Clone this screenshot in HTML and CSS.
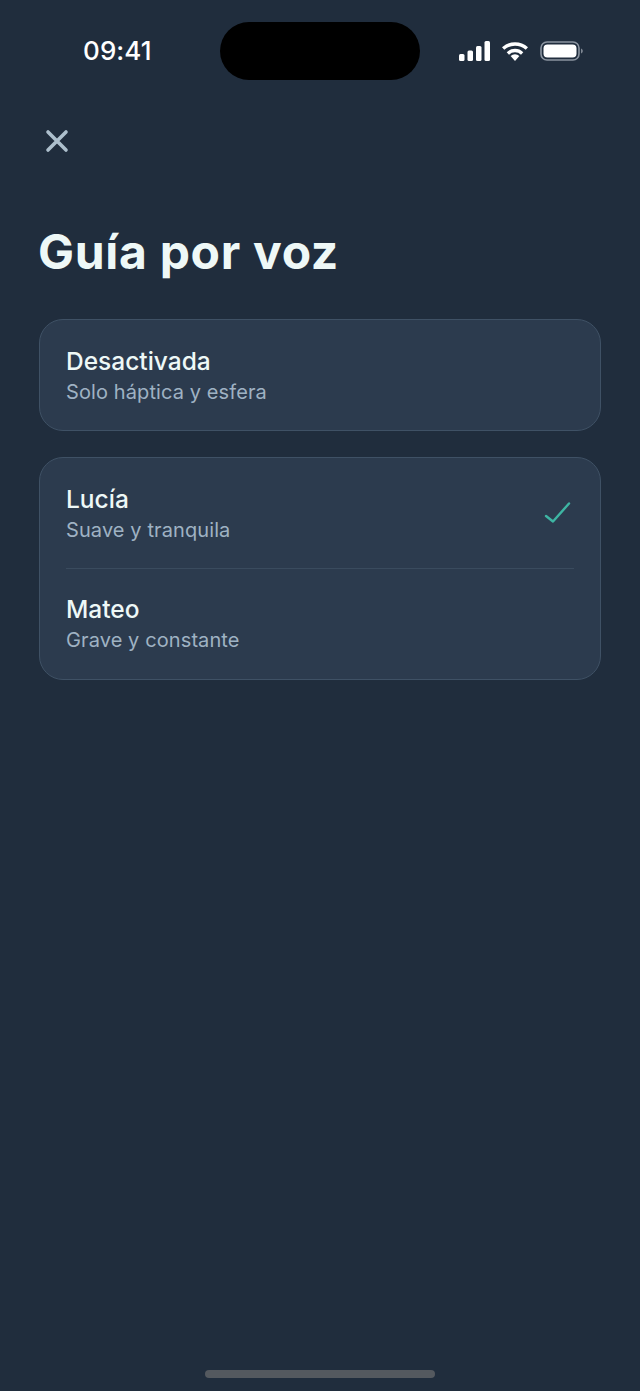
FILE: index.html
```html
<!DOCTYPE html>
<html lang="es">
<head>
<meta charset="utf-8">
<title>Guía por voz</title>
<link rel="stylesheet" href="styles.css">
</head>
<body>
<div class="screen">
  <header class="status">
    <span class="time">09:41</span>
    <div class="island"></div>
    <div class="status-icons">
      <svg class="signal" width="32" height="20" viewBox="0 0 32 20"><rect x="0" y="13" width="5.5" height="7" rx="1.5"/><rect x="8.5" y="9.5" width="5.5" height="10.5" rx="1.5"/><rect x="17" y="5" width="5.5" height="15" rx="1.5"/><rect x="25.5" y="0" width="5.5" height="20" rx="1.5"/></svg>
      <svg class="wifi" width="28" height="20" viewBox="0 0 28 20"><path d="M14 20l-4.4-5a6.5 6.5 0 0 1 8.800 0z"/><path d="M5.700 11.200a12 12 0 0 1 16.600 0l-2.300 2.500a8.600 8.600 0 0 0-12 0z"/><path d="M1 6.300a19.200 19.200 0 0 1 26 0l-2.300 2.500a15.800 15.800 0 0 0-21.400 0z"/></svg>
      <svg class="battery" width="43" height="20" viewBox="0 0 43 20"><rect class="batt-edge" x="1" y="1" width="38" height="18" rx="6"/><rect class="batt-fill" x="3.500" y="3.500" width="33" height="13" rx="4"/><path class="batt-cap" d="M41 7.500c1.200.4 1.800 1.300 1.800 2.500s-.6 2.100-1.800 2.500z"/></svg>
    </div>
  </header>

  <button class="close" type="button" aria-label="Cerrar">
    <svg width="24" height="24" viewBox="0 0 24 24"><path d="M3 3l18 18M21 3L3 21"/></svg>
  </button>

  <h1 class="title">Guía por voz</h1>

  <section class="card">
    <div class="option option-first">
      <div class="option-text">
        <div class="option-name">Desactivada</div>
        <div class="option-desc">Solo háptica y esfera</div>
      </div>
    </div>
  </section>

  <section class="card">
    <div class="option option-first">
      <div class="option-text">
        <div class="option-name">Lucía</div>
        <div class="option-desc">Suave y tranquila</div>
      </div>
      <svg class="check" width="28" height="24" viewBox="0 0 28 24"><path d="M2 15l7 5.500L25 2.500"/></svg>
    </div>
    <div class="divider"></div>
    <div class="option">
      <div class="option-text">
        <div class="option-name">Mateo</div>
        <div class="option-desc">Grave y constante</div>
      </div>
    </div>
  </section>

  <div class="home-bar"></div>
</div>
</body>
</html>
```
FILE: styles.css
```css
* { box-sizing: border-box; }
html, body { margin: 0; padding: 0; }
body { background: #202d3d; font-family: Inter, "Liberation Sans", sans-serif; }

.screen {
  position: relative;
  width: 640px;
  height: 1391px;
  padding: 22px 39px 0;
  overflow: hidden;
  background: #202d3d;
}

.status {
  display: grid;
  grid-template-columns: 1fr 200px 1fr;
  align-items: center;
  height: 58px;
  margin: 0 -39px;
}
.time {
  margin-left: 83px;
  color: #fff;
  font-size: 26px;
  font-weight: 550;
  line-height: 32px;
  letter-spacing: 0.1px;
}
.island { width: 200px; height: 58px; border-radius: 29px; background: #000; }
.status-icons {
  display: flex;
  align-items: center;
  gap: 10px;
  margin-left: 39px;
  height: 20px;
}
.signal, .wifi { fill: #fff; flex: none; }
.battery { flex: none; margin-left: 1px; }
.batt-edge { fill: none; stroke: #8b94a0; stroke-width: 1.600; }
.batt-fill { fill: #fff; }
.batt-cap { fill: #7f8894; }

.close {
  display: block;
  width: 24px;
  height: 24px;
  margin: 49px 0 0 6px;
  padding: 0;
  border: 0;
  background: none;
}
.close svg { display: block; fill: none; stroke: #adbfcd; stroke-width: 3.600; stroke-linecap: round; }

.title {
  margin: 71px 0 39px -1px;
  color: #eef8f7;
  font-size: 48px;
  font-weight: 700;
  line-height: 56px;
  letter-spacing: 0.7px;
}

.card {
  margin-bottom: 26px;
  padding: 0 26px;
  border: 1px solid #3f5165;
  border-radius: 24px;
  background: #2c3b4e;
}
.option {
  display: flex;
  align-items: center;
  justify-content: space-between;
  height: 110px;
}
.option-first { padding-top: 2px; }
.option-name {
  color: #eef8f7;
  font-size: 24.5px;
  font-weight: 500;
  line-height: 30px;
}
.option-desc {
  margin-top: 2px;
  color: #9fb2c3;
  font-size: 20px;
  line-height: 28px;
  letter-spacing: 0.1px;
}
.check { flex: none; margin: 0 2px 2px 0; fill: none; stroke: #3eb5a3; stroke-width: 2.400; stroke-linecap: round; stroke-linejoin: round; }
.divider { height: 1px; background: #3a4b5e; }

.home-bar {
  position: absolute;
  left: 205px;
  bottom: 13px;
  width: 230px;
  height: 8px;
  border-radius: 4px;
  background: #54595f;
}
```
